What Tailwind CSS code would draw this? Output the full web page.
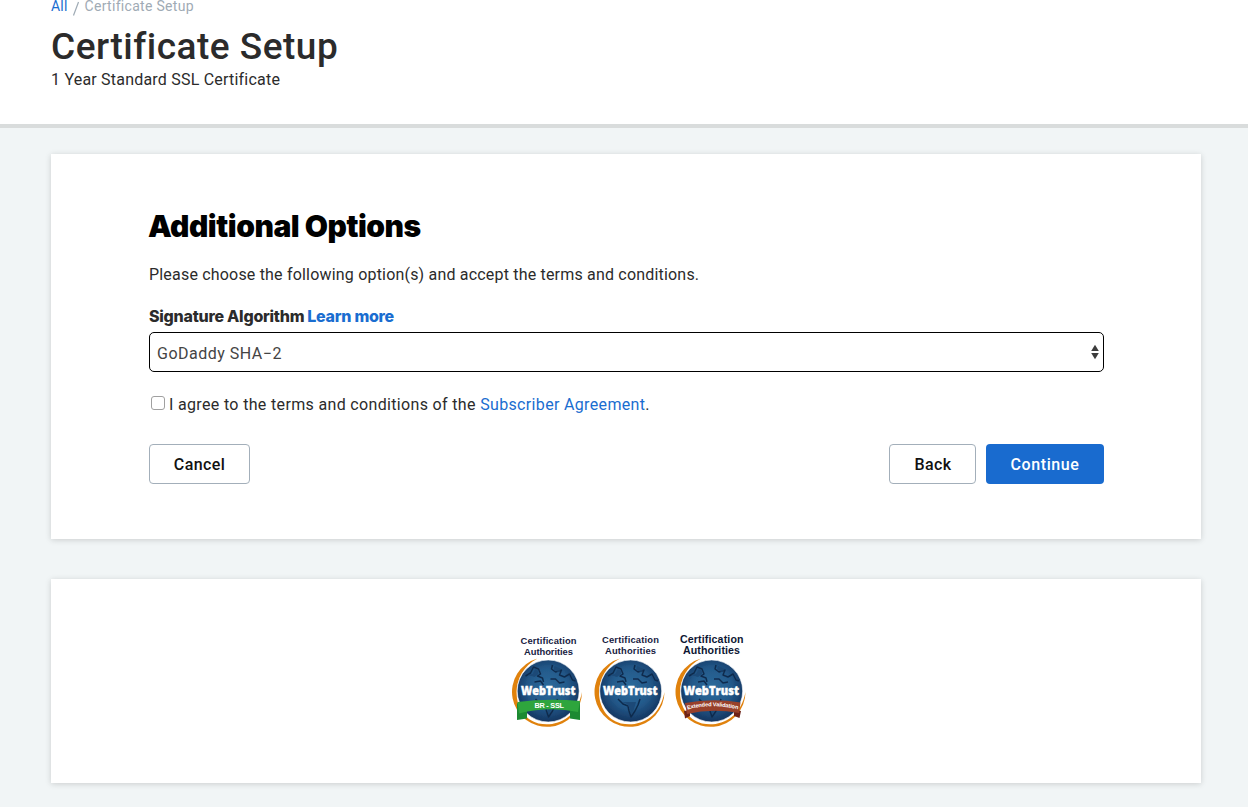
<!DOCTYPE html>
<html lang="en">
<head>
<meta charset="utf-8">
<title>Certificate Setup</title>
<script src="https://cdn.jsdelivr.net/npm/@tailwindcss/browser@4"></script>
</head>
<body class="h-[807px] overflow-hidden bg-[#f1f5f6] font-['Roboto',sans-serif] text-base text-[#2b2b2b]">
<header class="flex h-32 flex-col border-b-4 border-[#d9dcdc] bg-white pl-[51px]">
  <nav class="-mt-1 flex h-5 items-center text-sm leading-5 text-[#9fabb5]">
    <a class="tracking-[0.2px] text-[#1a6dd0]">All</a>
    <svg class="ml-1 mt-1.5 h-4 w-2" viewBox="0 0 8 16"><path d="M1.5 14.5 6.5 1" stroke="#9fabb5" stroke-width="1.2"/></svg>
    <span class="ml-[5px] tracking-[0.3px]">Certificate Setup</span>
  </nav>
  <h1 class="mt-2 h-11 whitespace-nowrap text-[37px] font-medium leading-[46px] tracking-[0.5px]">Certificate Setup</h1>
  <p class="h-6 leading-[23px] tracking-[0.21px]">1 Year Standard SSL Certificate</p>
</header>
<main class="flex flex-col gap-10 pl-[51px] pt-[26px]">
  <section class="flex h-[385px] w-[1150px] flex-col bg-white pl-[98px] pr-[97px] pt-[51px] shadow-[0_1px_6px_rgba(0,0,0,0.16)]">
    <h2 class="-ml-px h-11 whitespace-nowrap font-['Inter',sans-serif] text-[30px] font-black leading-[42px] tracking-[-0.48px] text-black">Additional Options</h2>
    <p class="mt-3.5 h-6 whitespace-nowrap leading-6 tracking-[0.19px]">Please choose the following option(s) and accept the terms and conditions.</p>
    <div class="mt-[17px] flex h-6 gap-1 whitespace-nowrap font-['Inter',sans-serif] font-extrabold leading-6 tracking-[-0.26px]">
      <span class="tracking-[-0.25px]">Signature Algorithm</span><a class="-ml-px text-[#1a6dd0]">Learn more</a>
    </div>
    <div class="mt-1 flex h-10 shrink-0 items-center justify-between rounded-[5px] border border-black pl-[7px] pr-1">
      <span class="mt-[3px] tracking-[0.5px] text-[#444]">GoDaddy SHA−2</span>
      <svg class="h-4 w-2" viewBox="0 0 8 16" fill="#3c3c3c"><path d="M4 .8 7.8 7H.2Z"/><path d="M4 15.2 7.8 9H.2Z"/></svg>
    </div>
    <label class="mt-[21px] flex h-6 items-center whitespace-nowrap leading-6 tracking-[0.34px]">
      <span class="mb-1 ml-0.5 mr-1 h-3.5 w-3.5 rounded-[3px] border border-[#a0a0a0] bg-white"></span>
      <span>I agree to the terms and conditions of the <a class="text-[#1a6dd0]">Subscriber Agreement</a>.</span>
    </label>
    <div class="mt-[27px] flex h-10 shrink-0 font-medium tracking-[0.4px] text-[#111]">
      <button class="h-10 w-[101px] rounded border border-[#a3afba] pt-0.5">Cancel</button>
      <button class="ml-auto h-10 w-[87px] rounded border border-[#a3afba] pl-px pt-0.5">Back</button>
      <button class="ml-2.5 h-10 w-[118px] rounded bg-[#196bcf] pt-0.5 tracking-[0.6px] text-white">Continue</button>
    </div>
  </section>
  <section class="h-[204px] w-[1150px] bg-white pl-[454px] pt-[51px] shadow-[0_1px_6px_rgba(0,0,0,0.16)]">
    <svg class="h-[102px] w-[247px]" viewBox="505 630 247 102" font-family="Liberation Sans, sans-serif" font-weight="700">
      <defs>
        <radialGradient id="globe" cx=".5" cy=".45" r=".58">
          <stop offset="0" stop-color="#2d6b9b"/><stop offset=".55" stop-color="#23598a"/><stop offset="1" stop-color="#12305a"/>
        </radialGradient>
        <g id="ball">
          <path d="M-10-32.5A35 34.8 0 1 0 34.5 1C29 29 8 36 -9 32.5C-37 25-39-18-10-32.5Z" fill="#e0820f"/>
          <circle cx=".7" r="31" fill="url(#globe)" stroke="#fff" stroke-width=".6"/>
          <path d="M-22-15-17-18-14-24-9-22-7-17-10-15-5-13-4-9M5-26 4-22 8-19 14-21 12-16 17-14 22-17 25-11 28-10M-13-9-7-10-4-6M3-12 8-12 12-8 17-9M-12 8-7 13-2 15-1 20 1 26 5 20 8 14 10 8" fill="none" stroke="#102c4e" stroke-width="1.5" stroke-linejoin="round"/>
          <path d="M-20-16-15-17-12-22-9-20-9-17-13-14ZM7-25 14-22 11-19 6-21ZM-8 11-3 13 0 18 1 23 4 18 6 11Z" fill="#1a4672" opacity=".8"/>
        </g>
        <filter id="soft" x="-10%" y="-10%" width="120%" height="120%"><feGaussianBlur stdDeviation=".35"/></filter>
      </defs>
      <g fill="#17213f" font-size="9.4">
        <text x="520.5" y="644" textLength="56">Certification</text><text x="524" y="654.5" textLength="49">Authorities</text>
        <text x="602" y="642.7" textLength="57">Certification</text><text x="605" y="653.5" textLength="51">Authorities</text>
        <g font-size="10.6" fill="#0d1633"><text x="680" y="643" textLength="63.5">Certification</text><text x="683" y="654" textLength="57">Authorities</text></g>
      </g>
      <g filter="url(#soft)">
        <use href="#ball" x="547.5" y="691"/><use href="#ball" x="630" y="691"/><use href="#ball" x="711" y="691"/>
        <path d="M517 720V703L527 709V718.5ZM580 720V702L570 709V718.5Z" fill="#1c8a33"/>
        <path d="M517.5 702Q548 698 580 701L578 712Q549 706 519 713.5Z" fill="#2fa53c"/>
        <path d="M684 711 690 710V716L685 718.5ZM741 711 734 710V716L739.5 718Z" fill="#6e2419"/>
        <path d="M685 703Q712 698 740.5 702.5L739 713Q712 708 687 714Z" fill="#98402c"/>
      </g>
      <g fill="#fff" stroke="#fff" stroke-width=".45" font-family="Open Sans, sans-serif" font-weight="800" font-size="12.6">
        <text x="521" y="694.7" textLength="54.5" lengthAdjust="spacingAndGlyphs">WebTrust</text>
        <text x="603" y="695" textLength="54.5" lengthAdjust="spacingAndGlyphs">WebTrust</text>
        <text x="683.5" y="695" textLength="55.5" lengthAdjust="spacingAndGlyphs">WebTrust</text>
      </g>
      <text x="534.5" y="707.5" fill="#fff" font-size="7.3" textLength="29.5">BR - SSL</text>
      <path id="arc" d="M687.5 709.5Q712 703 739 709.5" fill="none"/>
      <text fill="#fff" font-size="5.6"><textPath href="#arc" textLength="51">Extended Validation</textPath></text>
    </svg>
  </section>
</main>
</body>
</html>
